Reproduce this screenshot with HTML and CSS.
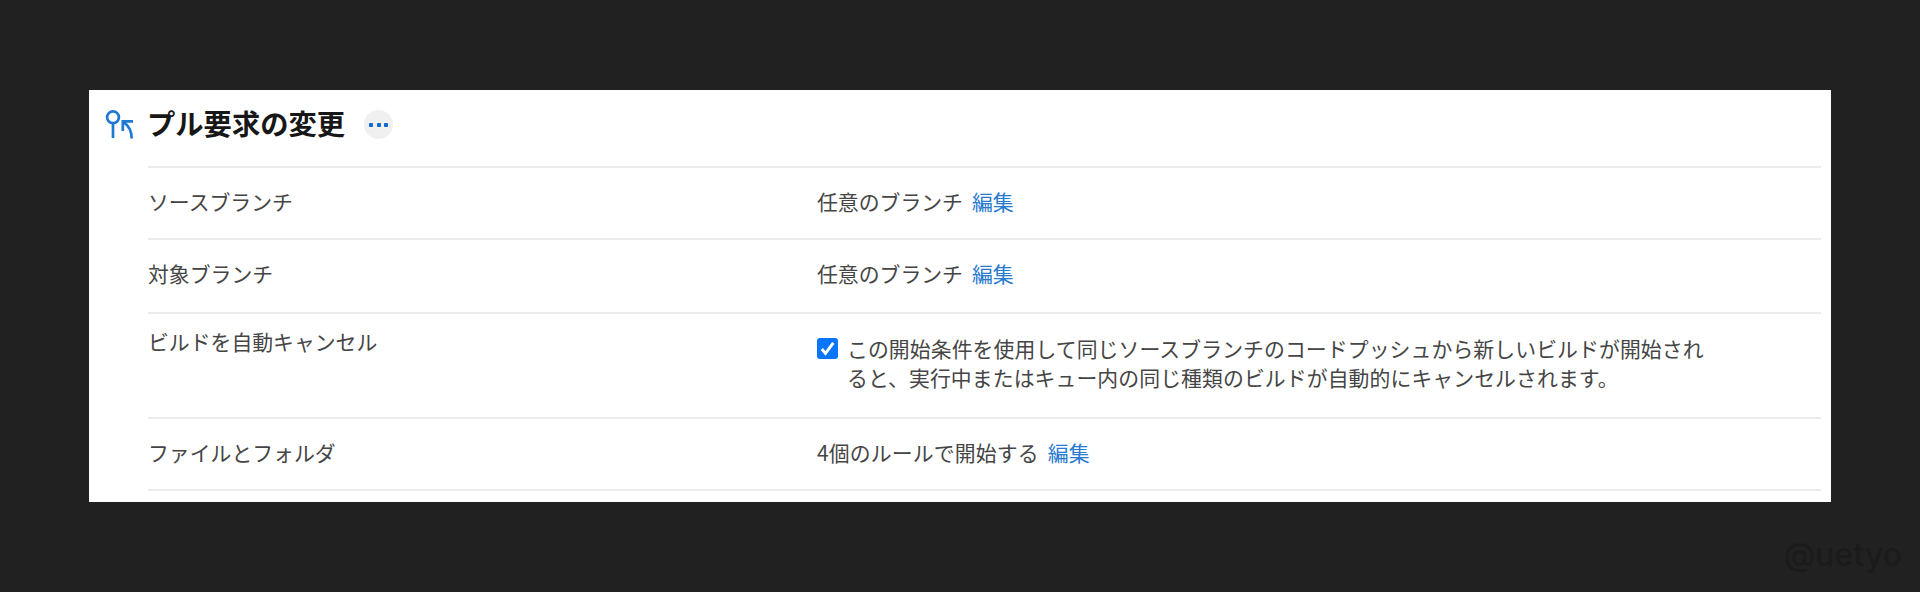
FILE: index.html
```html
<!DOCTYPE html>
<html lang="ja">
<head>
<meta charset="utf-8">
<title>プル要求の変更</title>
<link rel="stylesheet" href="styles.css">
</head>
<body>
<main class="panel">
  <header class="header">
    <svg class="branch-icon" width="30" height="32" viewBox="0 0 30 32" fill="none" stroke="currentColor" stroke-width="2.7">
      <circle cx="8" cy="8.3" r="5.9"/>
      <path d="M8 14.2V29"/>
      <path d="M17.800 22V12.400H28M18.200 12.800C23.800 16.500 26.800 21.500 26.700 29.600"/>
    </svg>
    <h1 class="title">プル要求の変更</h1>
    <button class="more" type="button" aria-label="その他"><i class="dot"></i><i class="dot"></i><i class="dot"></i></button>
  </header>
  <dl class="rows">
    <div class="row source">
      <dt class="label">ソースブランチ</dt>
      <dd class="value"><span>任意のブランチ</span><a class="edit">編集</a></dd>
    </div>
    <div class="row target">
      <dt class="label">対象ブランチ</dt>
      <dd class="value"><span>任意のブランチ</span><a class="edit">編集</a></dd>
    </div>
    <div class="row cancel">
      <dt class="label">ビルドを自動キャンセル</dt>
      <dd class="value">
        <svg class="checkbox" width="21" height="21" viewBox="0 0 21 21">
          <rect width="21" height="21" rx="3" fill="#0a75ff"/>
          <path d="M4.800 11L8.500 15.400L16.300 4.900" fill="none" stroke="#fff" stroke-width="2.900"/>
        </svg>
        <p class="description">この開始条件を使用して同じソースブランチのコードプッシュから新しいビルドが開始され<br>ると、実行中またはキュー内の同じ種類のビルドが自動的にキャンセルされます。</p>
      </dd>
    </div>
    <div class="row files">
      <dt class="label">ファイルとフォルダ</dt>
      <dd class="value"><span>4個のルールで開始する</span><a class="edit">編集</a></dd>
    </div>
  </dl>
</main>
<footer class="watermark">@uetyo</footer>
</body>
</html>
```
FILE: styles.css
```css
* {
  box-sizing: border-box;
}

body {
  margin: 0;
  height: 592px;
  overflow: hidden;
  padding: 90px 89px 0;
  background: #212121;
  color: #454545;
  font-family: "Noto Sans CJK JP", sans-serif;
  font-size: 20.85px;
  line-height: 29px;
}

.panel {
  height: 412px;
  padding: 0 10px 0 16px;
  background: #fff;
}

.header {
  display: flex;
  height: 76px;
  padding-top: 17px;
}

.branch-icon {
  margin-top: 2px;
  color: #1f78d1;
}

.title {
  width: 197px;
  margin: 0 0 0 12px;
  color: #171717;
  font-size: 28.3px;
  font-weight: 700;
  line-height: 32px;
  white-space: nowrap;
}

.more {
  display: flex;
  align-items: center;
  justify-content: center;
  gap: 3.5px;
  width: 29px;
  height: 29px;
  margin: 3px 0 0 20px;
  padding: 0;
  border: 0;
  border-radius: 50%;
  background: #f0f0f0;
}

.dot {
  width: 4px;
  height: 4px;
  border-radius: 1px;
  background: #0868cf;
}

.rows {
  margin: 0 0 0 43px;
  border-bottom: 2px solid #ececec;
}

.row {
  display: grid;
  grid-template-columns: 669px 1fr;
  border-top: 2px solid #ececec;
  white-space: nowrap;
}

.source {
  height: 72px;
  padding-top: 19px;
}

.target {
  height: 74px;
  padding-top: 19px;
}

.cancel {
  height: 105px;
  padding-top: 14px;
}

.cancel .label {
  margin-top: -1px;
}

.files {
  height: 72px;
  padding-top: 19px;
}

.files .value {
  letter-spacing: 0.15px;
}

.value {
  display: flex;
  gap: 9px;
  margin: 0;
}

.edit {
  color: #2879d0;
}

.checkbox {
  margin-top: 10px;
  flex: none;
}

.description {
  margin: 6px 0 0;
  letter-spacing: 0.09px;
}

.watermark {
  display: flex;
  justify-content: flex-end;
  margin: 33px -71px 0 0;
  color: #1b1b1b;
  font-family: Inter, sans-serif;
  font-size: 32px;
  font-weight: 500;
  line-height: 40px;
}
```
